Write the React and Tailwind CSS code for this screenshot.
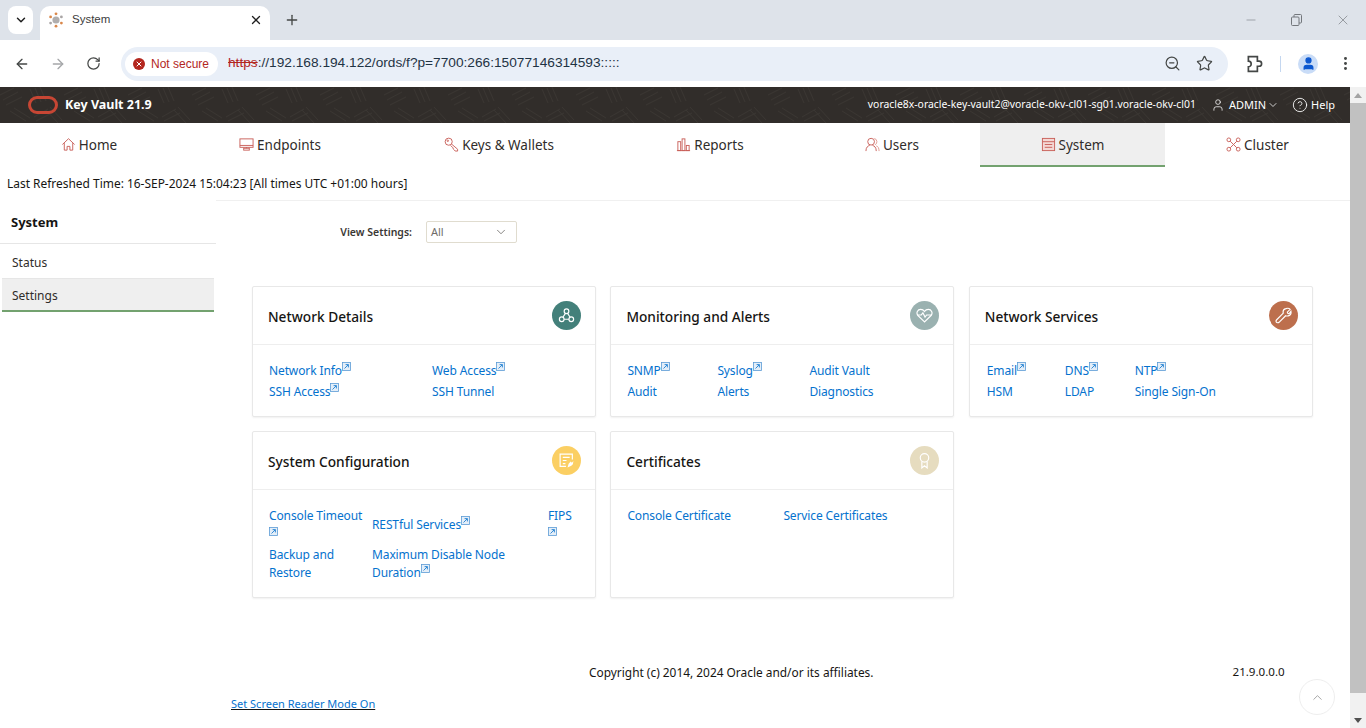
import React from "react";
import {
  ChevronDown,
  X,
  Plus,
  Minus,
  ArrowLeft,
  ArrowRight,
  RotateCw,
  ZoomOut,
  Star,
  MoreVertical,
  ChevronUp,
  CircleHelp,
  User,
} from "lucide-react";

// Small arrow-in-a-box that follows links opening a popup
const ExtIcon = ({ className = "" }) => (
  <svg width="9" height="9" viewBox="0 0 9 9" className={`inline-block ${className}`} fill="none" stroke="#5b9bd5" strokeWidth="0.8">
    <rect x="0.5" y="0.5" width="8" height="8" fill="#e4eef8" />
    <path d="M2.5 6.5 L6.2 2.8 M3.6 2.6 H6.4 V5.4" stroke="#0572ce" />
  </svg>
);

const NavIcon = ({ children }) => (
  <svg width="15" height="15" viewBox="0 0 16 16" fill="none" stroke="#c9605a" strokeWidth="1" className="shrink-0 -mt-[2px]">
    {children}
  </svg>
);

const navItems = [
  { label: "Home", icon: <NavIcon><path d="M1.5 8 L8 1.8 L14.5 8 M3.5 6.5 V14 H6.5 V10 H9.5 V14 H12.5 V6.5" /></NavIcon> },
  { label: "Endpoints", icon: <NavIcon><rect x="1" y="2" width="14" height="9" /><path d="M1 9 H15 M8 11 V12" /><rect x="5" y="12" width="6" height="2" /></NavIcon> },
  { label: "Keys & Wallets", icon: <NavIcon><circle cx="5" cy="5" r="3.8" /><circle cx="4" cy="4" r="0.8" /><path d="M8 7.5 L14.5 13 V15 H12 L11 13.8 L10 13 L9.5 11.5 L7 9" /></NavIcon> },
  { label: "Reports", icon: <NavIcon><path d="M1 14.5 H15" /><rect x="2" y="5" width="3" height="9.5" /><rect x="6.5" y="2" width="3" height="12.5" /><rect x="11" y="9" width="3" height="5.5" /></NavIcon> },
  { label: "Users", icon: <NavIcon><circle cx="6.5" cy="5" r="3.6" /><path d="M1 15 C1 11 3 9.5 5 9 M12 15 C12 11 10 9.5 8 9" /><path d="M10 1.6 A3.6 3.6 0 0 1 10.5 8.4 M12 9.5 C14 10 15 12 15 15" stroke="#e09a90" /></NavIcon> },
  { label: "System", active: true, icon: <NavIcon><rect x="1.5" y="1.5" width="13" height="13" fill="#f4d8d4" /><path d="M1.5 5 H14.5 M4 8 H12 M4 11 H12" /></NavIcon> },
  { label: "Cluster", icon: <NavIcon><circle cx="3" cy="3" r="2" /><circle cx="13" cy="3" r="2" /><circle cx="3" cy="13" r="2" /><circle cx="13" cy="13" r="2" /><path d="M4.5 4.5 L11.5 11.5 M11.5 4.5 L4.5 11.5" /></NavIcon> },
];

const Card = ({ title, color, icon, bodyClass, children }) => (
  <div className="bg-white border border-[#e8e8e8] rounded-[2px] shadow-[0_1px_2px_rgba(0,0,0,0.06)] flex flex-col">
    <div className="h-[58px] shrink-0 flex items-center justify-between pl-[15px] pr-[14px] border-b border-[#eeeeee]">
      <span className="mt-1 text-[13.7px] font-medium text-[#161513]">{title}</span>
      <span className={`w-[29px] h-[29px] rounded-full flex items-center justify-center ${color}`}>{icon}</span>
    </div>
    <div className={bodyClass}>{children}</div>
  </div>
);

const L = ({ children, ext }) => (
  <a className="text-[#0572ce] text-[12px] leading-[21px] whitespace-nowrap tracking-[-0.01em]">
    {children}
    {ext && <ExtIcon className="relative -top-[5px]" />}
  </a>
);

const W = ({ children, ext, extBelow }) => (
  <a className="text-[#0572ce] text-[12px] leading-[18px] block tracking-[-0.01em]">
    {children}
    {ext && <ExtIcon className="relative -top-[5px]" />}
    {extBelow && <span className="block leading-[12px] h-[18px]"><ExtIcon /></span>}
  </a>
);

const CardIcon = ({ children }) => (
  <svg width="17" height="17" viewBox="0 0 16 16" fill="none" stroke="#ffffff" strokeWidth="1.1">
    {children}
  </svg>
);

export default function App() {
  return (
    <div className="w-[1366px] h-[728px] overflow-hidden flex flex-col bg-white font-['Noto_Sans','Open_Sans',sans-serif] text-[#161513]">
      {/* Browser tab strip */}
      <div className="h-10 shrink-0 bg-[#dee3ea] flex items-end pl-2 relative">
        <div className="w-[25px] h-[28px] bg-white rounded-lg mb-[6px] flex items-center justify-center">
          <ChevronDown size={14} strokeWidth={2.5} color="#1f1f1f" />
        </div>
        <div className="ml-[7px] w-[230px] h-[34px] bg-white rounded-t-[10px] flex items-center pl-2 pr-[7px] pb-[6px]">
          <svg width="16" height="16" viewBox="0 0 16 16" className="shrink-0">
            <circle cx="8" cy="8" r="3.6" fill="#b0aeae" />
            <circle cx="8" cy="1.8" r="1.4" fill="#d9874a" />
            <circle cx="8" cy="14.2" r="1.4" fill="#d9874a" />
            <circle cx="2.6" cy="4.9" r="1.4" fill="#d9874a" />
            <circle cx="13.4" cy="4.9" r="1.4" fill="#a9a5a5" />
            <circle cx="2.6" cy="11.1" r="1.4" fill="#a9a5a5" />
            <circle cx="13.4" cy="11.1" r="1.4" fill="#d9874a" />
          </svg>
          <span className="ml-2 text-[11.5px] text-[#3c3c3c] font-['Liberation_Sans',sans-serif] flex-1">System</span>
          <X size={14} strokeWidth={2.2} color="#1f1f1f" />
        </div>
        <div className="ml-[14px] mb-[12px] w-4 h-4 flex items-center justify-center">
          <Plus size={16} strokeWidth={2} color="#444746" />
        </div>
        <div className="ml-auto mb-[12px] mr-[15px] flex items-center gap-[33px] text-[#73777c]">
          <Minus size={14} strokeWidth={1} />
          <svg width="11" height="12" viewBox="0 0 11 12" fill="none" stroke="currentColor" strokeWidth="1">
            <rect x="0.5" y="3" width="7.5" height="8.5" rx="1" />
            <path d="M3 3 V1.5 Q3 0.5 4 0.5 H9.5 Q10.5 0.5 10.5 1.5 V8 Q10.5 9 9.5 9 H8" />
          </svg>
          <X size={16} strokeWidth={1} />
        </div>
      </div>

      {/* Browser toolbar */}
      <div className="h-[47px] shrink-0 bg-white flex items-center relative rounded-t-lg">
        <div className="w-[121px] flex items-center pl-[14px] gap-5 shrink-0">
          <ArrowLeft size={16} strokeWidth={2} color="#444746" />
          <ArrowRight size={16} strokeWidth={2} color="#a5a7a9" />
          <RotateCw size={15} strokeWidth={2} color="#444746" />
        </div>
        <div className="w-[1107px] h-[34px] bg-[#e9eff8] rounded-full flex items-center pl-1 pr-[15px]">
          <div className="w-[93px] h-6 bg-white rounded-full flex items-center pl-2 shrink-0">
            <span className="w-[12px] h-[12px] rounded-full bg-[#b3261e] flex items-center justify-center">
              <X size={8} strokeWidth={3} color="#ffffff" />
            </span>
            <span className="ml-[6px] text-[12px] text-[#b3261e] font-['Liberation_Sans',sans-serif]">Not secure</span>
          </div>
          <div className="ml-[10px] text-[13.7px] text-[#1f3344] font-['Liberation_Sans',sans-serif] whitespace-nowrap">
            <span className="text-[#b3261e] line-through">https</span>://192.168.194.122/ords/f?p=7700:266:15077146314593:::::
          </div>
          <div className="ml-auto flex items-center gap-[15px]">
            <ZoomOut size={17} strokeWidth={1.7} color="#444746" />
            <Star size={17} strokeWidth={1.7} color="#444746" />
          </div>
        </div>
        <div className="ml-[17px] flex items-center">
          <svg width="18" height="18" viewBox="0 0 16 16" fill="none" stroke="#444746" strokeWidth="1.5">
            <path d="M3 1.5 H11 V5.5 H12.5 A2.2 2.2 0 0 1 12.5 10 H11 V14.5 H3 V10.5 A2.5 2.5 0 0 0 3 5.5 Z" />
          </svg>
          <span className="ml-[17px] w-px h-4 bg-[#c4d7f0]" />
          <span className="ml-[17px] w-[20px] h-[20px] rounded-full bg-[#c9dcf7] flex items-center justify-center overflow-hidden">
            <User size={15} fill="#0b57d0" color="#0b57d0" />
          </span>
          <MoreVertical size={17} strokeWidth={2.2} color="#444746" className="ml-[19px]" />
        </div>
      </div>

      <div className="flex-1 flex min-h-0">
        <div className="flex-1 min-w-0 flex flex-col">
          {/* App header */}
          <header className="h-9 shrink-0 bg-[#312d2a] relative overflow-hidden flex items-center pl-7 pr-[15px]">
            <svg className="absolute inset-0" width="1350" height="36" fill="none" stroke="#3a3632" strokeWidth="1">
              <defs>
                <pattern id="weave" width="64" height="36" patternUnits="userSpaceOnUse">
                  <path d="M0 8 L14 1 M3 13 L18 5 M6 18 L22 10 M30 2 L36 16 M35 1 L41 15 M40 0 L46 14 M50 20 L62 33 M46 23 L58 36 M10 24 L26 34 M14 21 L30 31 M34 30 L48 22 M36 34 L52 26" />
                </pattern>
              </defs>
              <rect width="1350" height="36" fill="url(#weave)" stroke="none" />
            </svg>
            <span className="relative w-[30px] h-[18px] rounded-[9px] border-[3px] border-[#c74634]" />
            <span className="relative ml-[7px] text-[12.5px] font-bold text-white">Key Vault 21.9</span>
            <div className="relative ml-auto flex items-center text-white text-[11px]">
              <span className="text-[10.4px]">voracle8x-oracle-key-vault2@voracle-okv-cl01-sg01.voracle-okv-cl01</span>
              <User size={14} strokeWidth={1.3} className="ml-[15px]" />
              <span className="ml-1">ADMIN</span>
              <ChevronDown size={12} strokeWidth={1.5} className="ml-px" />
              <CircleHelp size={16} strokeWidth={1.3} className="ml-[13px]" />
              <span className="ml-[3px]">Help</span>
            </div>
          </header>

          {/* Main tabs */}
          <nav className="h-11 shrink-0 grid grid-cols-[178px_204px_234px_188px_176px_185px_185px]">
            {navItems.map((item) => (
              <div
                key={item.label}
                className={`flex items-center justify-center gap-[3px] text-[13.5px] text-[#2f2c2a] ${
                  item.active ? "bg-[#efefef] border-b-2 border-[#73a26f] pt-[3px]" : "pt-px"
                }`}
              >
                {item.icon}
                <span>{item.label}</span>
              </div>
            ))}
          </nav>

          <div className="h-[33px] shrink-0 flex items-center pl-[7px] text-[11.95px] text-[#161513]">
            Last Refreshed Time: 16-SEP-2024 15:04:23 [All times UTC +01:00 hours]
          </div>

          <div className="flex-1 flex min-h-0">
            {/* Side menu */}
            <aside className="w-[216px] shrink-0 bg-white">
              <div className="h-11 flex items-center pl-[11px] pt-[2px] border-b border-[#e6e6e6] text-[13px] font-bold">System</div>
              <div className="h-[34px] flex items-center pl-3 pt-[3px] text-[12px] text-[#2f2c2a]">Status</div>
              <div className="h-[34px] ml-[2px] mr-[2px] flex items-center pl-[10px] pt-[2px] bg-[#efefef] border-t border-[#e6e6e6] border-b-2 border-b-[#73a26f] text-[12px] text-[#2f2c2a]">
                Settings
              </div>
            </aside>

            {/* Cards */}
            <main className="flex-1 min-w-0 border-t border-[#f0f0f0] flex flex-col relative">
              <div className="mt-5 h-[22px] flex items-center">
                <span className="w-[196px] pt-px text-right text-[10.5px] font-semibold text-[#3b3835]">View Settings:</span>
                <div className="ml-[14px] w-[91px] h-[22px] border border-[#e0dccf] rounded-[2px] flex items-center justify-between pl-1 pr-2 text-[11px] text-[#6f6c69]">
                  <span>All</span>
                  <ChevronDown size={14} strokeWidth={1.2} color="#55524f" />
                </div>
              </div>

              <div className="mt-[43px] ml-9 grid grid-cols-[344px_344px_344px] gap-x-[14.4px] gap-y-[14px]">
                <Card
                  title="Network Details"
                  color="bg-[#43807a]"
                  icon={<CardIcon><circle cx="8" cy="4" r="2.2" /><circle cx="3.5" cy="11.5" r="2.2" /><circle cx="12.5" cy="11.5" r="2.2" /><path d="M5.7 11.5 H10.3 M7 6 L4.6 9.6 M9 6 L11.4 9.6" /></CardIcon>}
                  bodyClass="h-[71px] pt-[15px] pl-4 grid grid-cols-[163px_1fr] auto-rows-[21px]"
                >
                  <L ext>Network Info</L>
                  <L ext>Web Access</L>
                  <L ext>SSH Access</L>
                  <L>SSH Tunnel</L>
                </Card>
                <Card
                  title="Monitoring and Alerts"
                  color="bg-[#9ab1b0]"
                  icon={<CardIcon><path d="M8 14 L1.8 8 C-0.2 5.5 1.5 2.2 4.4 2.2 C6 2.2 7.2 3 8 4.2 C8.8 3 10 2.2 11.6 2.2 C14.5 2.2 16.2 5.5 14.2 8 Z" /><path d="M1 7.5 H5 L6.5 5.5 L8.5 9.5 L10 7.5 H15" /></CardIcon>}
                  bodyClass="h-[71px] pt-[15px] pl-4 grid grid-cols-[90px_92px_1fr] auto-rows-[21px]"
                >
                  <L ext>SNMP</L>
                  <L ext>Syslog</L>
                  <L>Audit Vault</L>
                  <L>Audit</L>
                  <L>Alerts</L>
                  <L>Diagnostics</L>
                </Card>
                <Card
                  title="Network Services"
                  color="bg-[#bd6f4d]"
                  icon={<CardIcon><path d="M10.2 1.5 C12 0.9 13.6 1.4 14.3 2.2 L11.6 4.8 L12 6 L13.2 6.4 L15 4 C15.4 6.2 14.3 8 12.4 8.4 C11.4 8.6 10.6 8.4 10 8.2 L3.8 14.4 C3 15.1 1.8 14.9 1.3 14.2 C0.8 13.4 1 12.6 1.6 12 L7.8 5.8 C7.3 3.8 8.4 2 10.2 1.5 Z" /></CardIcon>}
                  bodyClass="h-[71px] pt-[15px] pl-[17px] grid grid-cols-[78px_70px_1fr] auto-rows-[21px]"
                >
                  <L ext>Email</L>
                  <L ext>DNS</L>
                  <L ext>NTP</L>
                  <L>HSM</L>
                  <L>LDAP</L>
                  <L>Single Sign-On</L>
                </Card>
                <Card
                  title="System Configuration"
                  color="bg-[#fbcf63]"
                  icon={<CardIcon><path d="M13.5 7 V2 H2 V13.5 H7.5 M4.5 5 H11 M4.5 8 H8 M4.5 11 H7" /><path d="M14.5 8.5 L13 10 L12 9 L10 11 L9 14.5 L12.5 13 L14 11.5 Z" fill="#ffffff" stroke="none" /></CardIcon>}
                  bodyClass="h-[107px] pt-[17px] pl-4 pr-3 grid grid-cols-[103px_176px_1fr] auto-rows-[36px] gap-y-[3px]"
                >
                  <W extBelow>Console Timeout</W>
                  <div className="flex items-center"><W ext>RESTful Services</W></div>
                  <W extBelow>FIPS</W>
                  <W>Backup and Restore</W>
                  <W ext>Maximum Disable Node Duration</W>
                </Card>
                <Card
                  title="Certificates"
                  color="bg-[#e6dcbf]"
                  icon={<CardIcon><circle cx="8" cy="5.5" r="4" /><path d="M5.5 9 V15 L8 13 L10.5 15 V9" /></CardIcon>}
                  bodyClass="h-[107px] pt-[15px] pl-4 grid grid-cols-[156px_1fr] auto-rows-[21px]"
                >
                  <L>Console Certificate</L>
                  <L>Service Certificates</L>
                </Card>
              </div>

              <div className="mt-[65px] flex leading-[18px]">
                <span className="ml-[373px] text-[11.9px]">Copyright (c) 2014, 2024 Oracle and/or its affiliates.</span>
                <span className="ml-[359px] text-[11.6px]">21.9.0.0.0</span>
              </div>
              <a className="mt-[14px] ml-[15px] self-start text-[11px] leading-[18px] text-[#0572ce] underline decoration-[#161513]">
                Set Screen Reader Mode On
              </a>

              <div className="absolute left-[1083px] top-[478px] w-9 h-9 rounded-full border border-[#eeeeee] bg-white flex items-center justify-center">
                <ChevronUp size={15} strokeWidth={1.2} color="#8a8a8a" />
              </div>
            </main>
          </div>
        </div>

        {/* Scrollbar */}
        <div className="w-4 shrink-0 bg-[#f1f1f1] flex flex-col items-center">
          <div className="h-4 flex items-center justify-center">
            <span className="w-0 h-0 border-x-[4px] border-x-transparent border-b-[5px] border-b-[#a3a3a3]" />
          </div>
          <div className="w-full h-[590px] bg-[#c1c1c1]" />
          <div className="mt-auto h-4 flex items-center justify-center">
            <span className="w-0 h-0 border-x-[4px] border-x-transparent border-t-[5px] border-t-[#505050]" />
          </div>
        </div>
      </div>
    </div>
  );
}
